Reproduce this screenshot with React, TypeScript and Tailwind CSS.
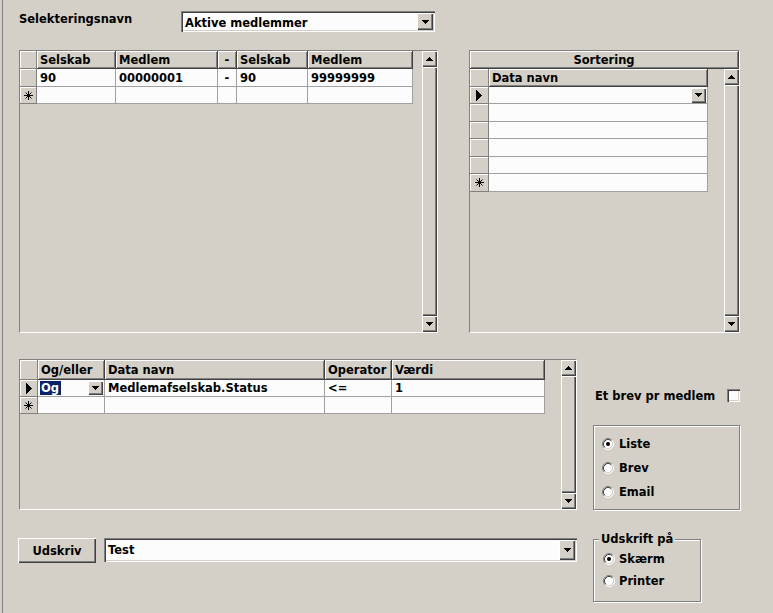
import React from 'react';

// Win2000 style 3D edges
const RAISED = 'shadow-[inset_1px_1px_0_#fff,inset_-1px_-1px_0_#404040,inset_-2px_-2px_0_#808080]';
const SUNKEN = 'shadow-[inset_1px_1px_0_#808080,inset_2px_2px_0_#404040,inset_-1px_-1px_0_#fff,inset_-2px_-2px_0_#d4d0c8]';
const ETCHED = 'border border-[#808080] shadow-[1px_1px_0_#fff,inset_1px_1px_0_#fff]';

const ArrowDown = () => (
  <svg width="7" height="4" viewBox="0 0 7 4">
    <path d="M0 0h7v1h-1v1h-1v1h-1v1h-1v-1h-1v-1h-1v-1h-1z" fill="#000" />
  </svg>
);

const ArrowUp = () => (
  <svg width="7" height="4" viewBox="0 0 7 4">
    <path d="M3 0h1v1h1v1h1v1h1v1h-7v-1h1v-1h1v-1h1z" fill="#000" />
  </svg>
);

const Pointer = () => (
  <svg width="6" height="11" viewBox="0 0 6 11">
    <path d="M0 0h1v1h1v1h1v1h1v1h1v1h1v1h-1v1h-1v1h-1v1h-1v1h-1v1h-1z" fill="#000" />
  </svg>
);

const Star = () => (
  <svg width="9" height="9" viewBox="0 0 9 9">
    <path d="M4.5 0v9M0 4.5h9M1.5 1.5l6 6M7.5 1.5l-6 6" stroke="#000" strokeWidth="1" />
  </svg>
);

const Radio = ({ checked }: { checked?: boolean }) => (
  <svg width="12" height="12" viewBox="0 0 12 12" className="shrink-0">
    <circle cx="6" cy="6" r="4.5" fill="#fff" />
    <path d="M2.11 9.89A5.5 5.5 0 0 1 9.89 2.11" stroke="#808080" fill="none" />
    <path d="M9.89 2.11A5.5 5.5 0 0 1 2.11 9.89" stroke="#fff" fill="none" />
    <path d="M2.82 9.18A4.5 4.5 0 0 1 9.18 2.82" stroke="#404040" fill="none" />
    <path d="M9.18 2.82A4.5 4.5 0 0 1 2.82 9.18" stroke="#d4d0c8" fill="none" />
    {checked && <circle cx="6" cy="6" r="2" fill="#000" />}
  </svg>
);

const DropBtn = ({ className = '' }: { className?: string }) => (
  <div className={`bg-[#d4d0c8] ${RAISED} flex items-center justify-center shrink-0 ${className}`}>
    <ArrowDown />
  </div>
);

const ScrollBar = () => (
  <div className="w-[15px] h-full flex flex-col shrink-0">
    <div className={`h-[16px] bg-[#d4d0c8] ${RAISED} flex items-center justify-center`}>
      <ArrowUp />
    </div>
    <div className={`flex-1 bg-[#d4d0c8] ${RAISED}`} />
    <div className={`h-[16px] bg-[#d4d0c8] ${RAISED} flex items-center justify-center`}>
      <ArrowDown />
    </div>
  </div>
);

type Kind = 'head' | 'sel' | 'data';
const cellCls: Record<Kind, string> = {
  head: 'bg-[#d4d0c8] border-r border-b border-[#404040] shadow-[inset_1px_1px_0_#fff,inset_-1px_-1px_0_#808080] pl-[3px] pt-[1px]',
  sel: 'bg-[#d4d0c8] border-r border-b border-[#808080] shadow-[inset_1px_1px_0_#fff] justify-center',
  data: 'bg-[#fcfcfc] border-r border-b border-[#a0a0a0] pl-[3px]',
};

const Cell = ({ w, kind, children, className = '' }: { w: string; kind: Kind; children?: React.ReactNode; className?: string }) => (
  <div className={`${w} ${cellCls[kind]} h-full flex items-center shrink-0 overflow-hidden whitespace-nowrap ${className}`}>
    {children}
  </div>
);

const Combo = ({ text, className }: { text: string; className: string }) => (
  <div className={`bg-[#fcfcfc] ${SUNKEN} flex p-[2px] ${className}`}>
    <div className="flex-1 pl-[2px] pt-[3px] leading-[14px]">{text}</div>
    <DropBtn className="w-[16px] h-full" />
  </div>
);

export default function App() {
  return (
    <div className="w-[773px] h-[613px] bg-[#d4d0c8] pl-[2px] overflow-hidden font-['DejaVu_Sans',Verdana,sans-serif] font-bold text-[11.5px] leading-[14px] text-black">
      <div className="h-full border-l border-[#808080] pl-[16px]">
        {/* selection name */}
        <div className="flex items-start pt-[11px]">
          <div className="w-[162px] mt-[1px]">Selekteringsnavn</div>
          <Combo text="Aktive medlemmer" className="w-[254px] h-[21px]" />
        </div>

        {/* member range + sorting */}
        <div className="flex items-start mt-[18px]">
          <div className="w-[419px] h-[283px] border border-t-[#808080] border-l-[#808080] border-b-white border-r-white flex">
            <div className="w-[393px]">
              <div className="flex h-[18px]">
                <Cell w="w-[17px]" kind="sel" />
                <Cell w="w-[79px]" kind="head">Selskab</Cell>
                <Cell w="w-[102px]" kind="head">Medlem</Cell>
                <Cell w="w-[19px]" kind="head" className="justify-center !pl-0">-</Cell>
                <Cell w="w-[71px]" kind="head">Selskab</Cell>
                <Cell w="w-[105px]" kind="head">Medlem</Cell>
              </div>
              <div className="flex h-[18px]">
                <Cell w="w-[17px]" kind="sel" />
                <Cell w="w-[79px]" kind="data">90</Cell>
                <Cell w="w-[102px]" kind="data">00000001</Cell>
                <Cell w="w-[19px]" kind="data" className="justify-center !pl-0">-</Cell>
                <Cell w="w-[71px]" kind="data">90</Cell>
                <Cell w="w-[105px]" kind="data">99999999</Cell>
              </div>
              <div className="flex h-[17px]">
                <Cell w="w-[17px]" kind="sel"><Star /></Cell>
                <Cell w="w-[79px]" kind="data" />
                <Cell w="w-[102px]" kind="data" />
                <Cell w="w-[19px]" kind="data" />
                <Cell w="w-[71px]" kind="data" />
                <Cell w="w-[105px]" kind="data" />
              </div>
            </div>
            <div className="w-[9px]" />
            <ScrollBar />
          </div>

          <div className="ml-[31px] w-[271px] h-[283px] border border-t-[#808080] border-l-[#808080] border-b-white border-r-white flex flex-col">
            <div className="h-[18px] flex">
              <Cell w="w-full" kind="head" className="justify-center !pl-0">Sortering</Cell>
            </div>
            <div className="flex-1 flex">
              <div className="w-[238px]">
                <div className="flex h-[18px]">
                  <Cell w="w-[19px]" kind="sel" />
                  <Cell w="w-[219px]" kind="head">Data navn</Cell>
                </div>
                <div className="flex h-[17px]">
                  <Cell w="w-[19px]" kind="sel"><Pointer /></Cell>
                  <Cell w="w-[219px]" kind="data" className="justify-end !pl-0 pr-[1px]">
                    <DropBtn className="w-[15px] h-[15px]" />
                  </Cell>
                </div>
                {['h-[18px]', 'h-[17px]', 'h-[18px]', 'h-[17px]'].map((h, i) => (
                  <div key={i} className={`flex ${h}`}>
                    <Cell w="w-[19px]" kind="sel" />
                    <Cell w="w-[219px]" kind="data" />
                  </div>
                ))}
                <div className="flex h-[18px]">
                  <Cell w="w-[19px]" kind="sel"><Star /></Cell>
                  <Cell w="w-[219px]" kind="data" />
                </div>
              </div>
              <div className="w-[16px]" />
              <ScrollBar />
            </div>
          </div>
        </div>

        {/* criteria + options */}
        <div className="flex items-start mt-[26px]">
          <div className="w-[558px] h-[151px] border border-t-[#808080] border-l-[#808080] border-b-white border-r-white flex">
            <div className="w-[525px]">
              <div className="flex h-[20px]">
                <Cell w="w-[18px]" kind="sel" />
                <Cell w="w-[67px]" kind="head">Og/eller</Cell>
                <Cell w="w-[220px]" kind="head">Data navn</Cell>
                <Cell w="w-[67px]" kind="head">Operator</Cell>
                <Cell w="w-[153px]" kind="head">Værdi</Cell>
              </div>
              <div className="flex h-[17px]">
                <Cell w="w-[18px]" kind="sel"><Pointer /></Cell>
                <Cell w="w-[67px]" kind="data" className="!pl-[2px] pr-[1px] justify-between">
                  <span className="bg-[#0a246a] text-white w-[21px] pl-[1px] leading-[14px]">Og</span>
                  <DropBtn className="w-[15px] h-[14px]" />
                </Cell>
                <Cell w="w-[220px]" kind="data">Medlemafselskab.Status</Cell>
                <Cell w="w-[67px]" kind="data">&lt;=</Cell>
                <Cell w="w-[153px]" kind="data">1</Cell>
              </div>
              <div className="flex h-[17px]">
                <Cell w="w-[18px]" kind="sel"><Star /></Cell>
                <Cell w="w-[67px]" kind="data" />
                <Cell w="w-[220px]" kind="data" />
                <Cell w="w-[67px]" kind="data" />
                <Cell w="w-[153px]" kind="data" />
              </div>
            </div>
            <div className="w-[16px]" />
            <ScrollBar />
          </div>

          <div className="ml-[16px] w-[147px]">
            <div className="mt-[30px] h-[13px] flex items-center justify-between pl-[2px]">
              <span>Et brev pr medlem</span>
              <div className={`w-[13px] h-[13px] bg-[#fcfcfc] ${SUNKEN}`} />
            </div>
            <div className={`mt-[23px] h-[85px] ${ETCHED} flex flex-col gap-[8px] pt-[10px] pl-[8px]`}>
              {[
                { label: 'Liste', checked: true },
                { label: 'Brev' },
                { label: 'Email' },
              ].map((r) => (
                <div key={r.label} className="h-[16px] flex items-center gap-[5px]">
                  <Radio checked={r.checked} />
                  <span>{r.label}</span>
                </div>
              ))}
            </div>
          </div>
        </div>

        {/* print bar */}
        <div className="flex items-start mt-[28px]">
          <button className={`-ml-[1px] w-[78px] h-[25px] bg-[#d4d0c8] ${RAISED} flex items-center justify-center`}>
            Udskriv
          </button>
          <Combo text="Test" className="ml-[8px] w-[473px] h-[24px]" />
          <fieldset className={`ml-[16px] -mt-[6px] w-[108px] h-[70px] ${ETCHED}`}>
            <legend className="ml-[5px] px-[2px] bg-[#d4d0c8] leading-[14px]">Udskrift på</legend>
            <div className="mt-[5px] pl-[9px] flex flex-col gap-[6px]">
              <div className="h-[16px] flex items-center gap-[4px]">
                <Radio checked />
                <span>Skærm</span>
              </div>
              <div className="h-[16px] flex items-center gap-[4px]">
                <Radio />
                <span>Printer</span>
              </div>
            </div>
          </fieldset>
        </div>
      </div>
    </div>
  );
}
